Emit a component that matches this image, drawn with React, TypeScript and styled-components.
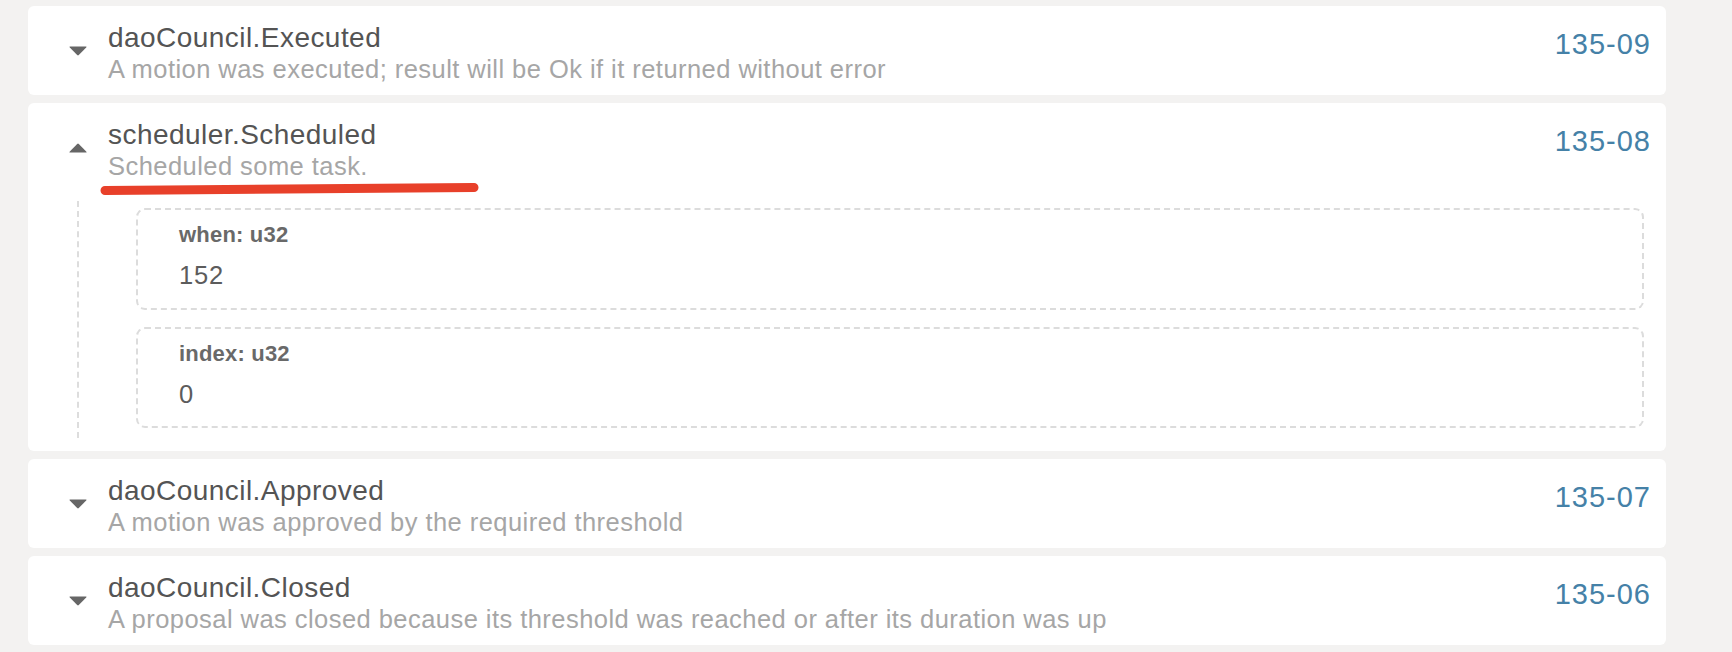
import React from "react";
import styled, { createGlobalStyle } from "styled-components";

const Global = createGlobalStyle`
  html, body {
    margin: 0;
    padding: 0;
    background: #f3f2f1;
  }
  body {
    font-family: "Liberation Sans", Arial, Helvetica, sans-serif;
    -webkit-font-smoothing: antialiased;
  }
`;

const Page = styled.div`
  display: flex;
  flex-direction: column;
  gap: 8px;
  padding: 6px 66px 7px 28px;
  width: 1638px;
`;

const Card = styled.section`
  position: relative;
  background: #ffffff;
  border-radius: 6px;
  display: flex;
  flex-direction: column;
`;

const Header = styled.div`
  display: flex;
  align-items: flex-start;
  height: 89px;
  box-sizing: border-box;
  padding: 16px 15px 11px 41px;
`;

const CaretBox = styled.div`
  width: 18px;
  height: 10px;
  margin-top: 24px;
  margin-right: 21px;
  flex: none;
  display: flex;
`;

const TextCol = styled.div`
  flex: 1;
  display: flex;
  flex-direction: column;
  min-width: 0;
`;

const Title = styled.div`
  font-size: 28px;
  line-height: 32px;
  letter-spacing: 0.45px;
  color: #545454;
  white-space: nowrap;
`;

const Desc = styled.div`
  font-size: 25.5px;
  line-height: 30px;
  letter-spacing: 0.45px;
  color: #a6a6a6;
  white-space: nowrap;
`;

const Ref = styled.div`
  margin-top: 6px;
  font-size: 29px;
  line-height: 32px;
  letter-spacing: 1px;
  color: #4581a7;
  white-space: nowrap;
`;

const Body = styled.div`
  padding: 9px 22px 13px 49px;
`;

const Tree = styled.div`
  border-left: 2px dashed #dddddd;
  padding: 7px 0 10px 57px;
  display: flex;
  flex-direction: column;
  gap: 17px;
`;

const Field = styled.div<{ $h: number }>`
  box-sizing: border-box;
  height: ${(p) => p.$h}px;
  border: 2px dashed #dcdcdc;
  border-radius: 9px;
  padding: 10px 40px 0 41px;
  display: flex;
  flex-direction: column;
  gap: 7px;
`;

const FieldLabel = styled.div`
  font-size: 22px;
  line-height: 30px;
  font-weight: 700;
  letter-spacing: 0.2px;
  color: #696969;
`;

const FieldValue = styled.div`
  font-size: 25.5px;
  line-height: 36px;
  letter-spacing: 0.8px;
  color: #5c5c5c;
`;

const Annotation = styled.svg`
  position: absolute;
  left: 72px;
  top: 76px;
  pointer-events: none;
`;

const Caret = ({ up }: { up?: boolean }) => (
  <svg width="18" height="10" viewBox="0 0 18 10" style={{ transform: up ? "rotate(180deg)" : undefined }}>
    <path
      d="M1.2 0.5 H16.8 Q18.2 0.5 17.2 1.6 L9.8 9.1 Q9 9.9 8.2 9.1 L0.8 1.6 Q-0.2 0.5 1.2 0.5 Z"
      fill="#666666"
    />
  </svg>
);

type Ev = { title: string; desc: string; id: string };

const EventHeader = ({ ev, open }: { ev: Ev; open?: boolean }) => (
  <Header>
    <CaretBox>
      <Caret up={open} />
    </CaretBox>
    <TextCol>
      <Title>{ev.title}</Title>
      <Desc>{ev.desc}</Desc>
    </TextCol>
    <Ref>{ev.id}</Ref>
  </Header>
);

const events: Ev[] = [
  { title: "daoCouncil.Executed", desc: "A motion was executed; result will be Ok if it returned without error", id: "135-09" },
  { title: "scheduler.Scheduled", desc: "Scheduled some task.", id: "135-08" },
  { title: "daoCouncil.Approved", desc: "A motion was approved by the required threshold", id: "135-07" },
  { title: "daoCouncil.Closed", desc: "A proposal was closed because its threshold was reached or after its duration was up", id: "135-06" },
];

const fields = [
  { label: "when: u32", value: "152", h: 102 },
  { label: "index: u32", value: "0", h: 101 },
];

export default function App() {
  return (
    <>
      <Global />
      <Page>
        <Card>
          <EventHeader ev={events[0]} />
        </Card>
        <Card>
          <EventHeader ev={events[1]} open />
          <Body>
            <Tree>
              {fields.map((f) => (
                <Field key={f.label} $h={f.h}>
                  <FieldLabel>{f.label}</FieldLabel>
                  <FieldValue>{f.value}</FieldValue>
                </Field>
              ))}
            </Tree>
          </Body>
          <Annotation width="384" height="18" viewBox="0 0 384 18">
            <path
              d="M5 11.5 C 60 10, 200 9.5, 374 8.5"
              stroke="#e8402a"
              strokeWidth="9"
              strokeLinecap="round"
              fill="none"
            />
          </Annotation>
        </Card>
        <Card>
          <EventHeader ev={events[2]} />
        </Card>
        <Card>
          <EventHeader ev={events[3]} />
        </Card>
      </Page>
    </>
  );
}
